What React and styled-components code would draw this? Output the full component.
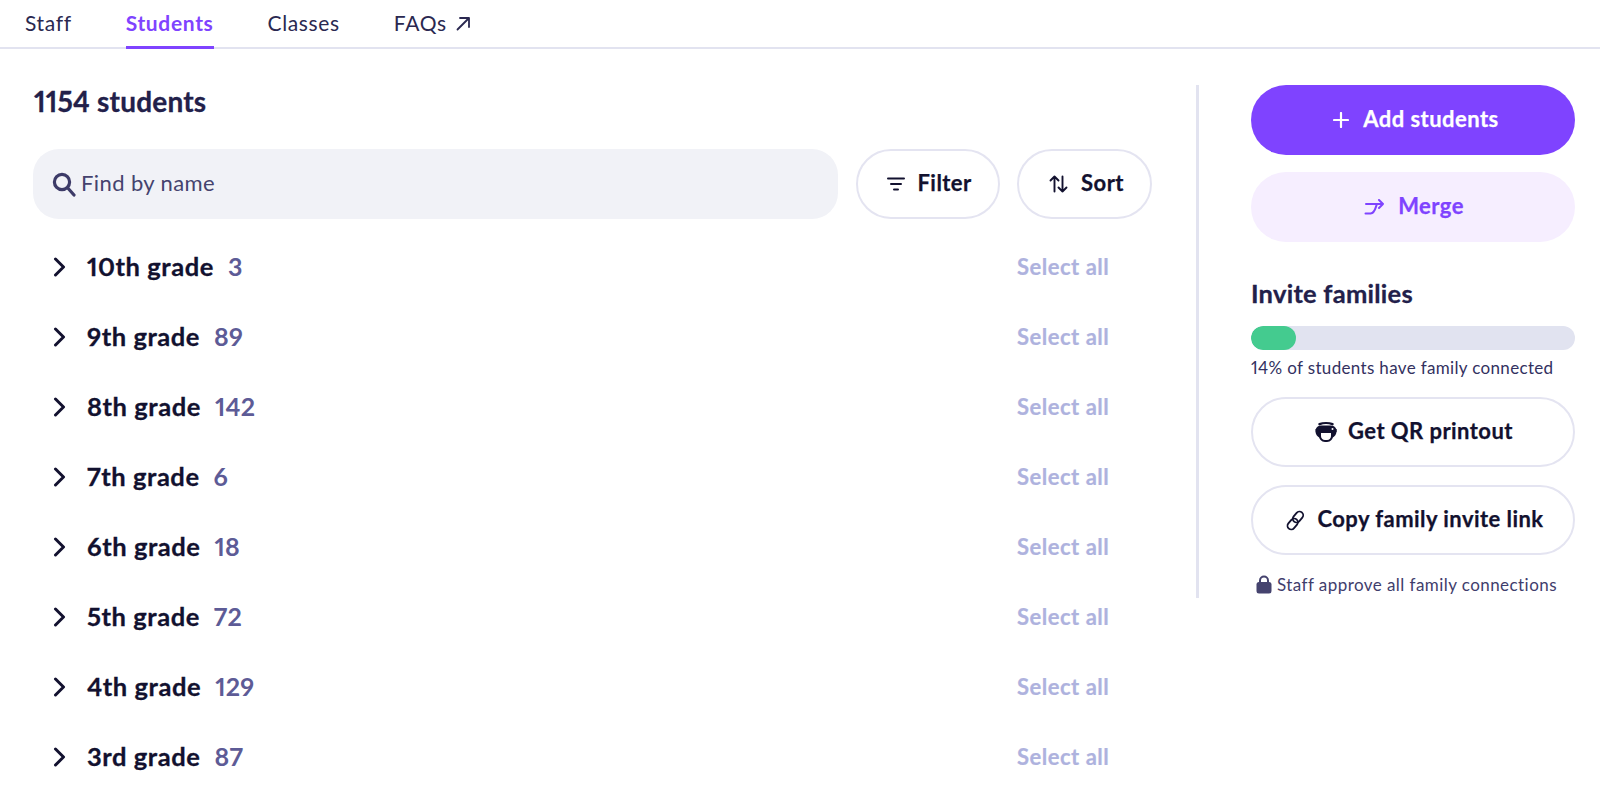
import React from "react";
import styled, { createGlobalStyle } from "styled-components";

const Global = createGlobalStyle`
  html, body { margin: 0; padding: 0; background: #fff; }
  body { font-family: "Lato", "Open Sans", sans-serif; color: #22204a; overflow: hidden; font-variant-numeric: proportional-nums; }
  * { box-sizing: border-box; }
`;

const Page = styled.div`
  width: 1600px;
  height: 802px;
  overflow: hidden;
`;
const TabBar = styled.nav`
  display: flex;
  height: 49px;
  padding-left: 25px;
  gap: 54px;
  border-bottom: 2px solid #e2e3f0;
`;
const Tab = styled.a`
  height: 49px;
  padding-top: 9px;
  font-size: 21px;
  line-height: 28px;
  letter-spacing: 0.65px;
  font-weight: ${(p) => (p.$active ? 700 : 400)};
  color: ${(p) => (p.$active ? "#7f43ff" : "#2a2850")};
  border-bottom: ${(p) => (p.$active ? "3px solid #7f43ff" : "none")};
  display: flex;
  gap: 9px;
  svg { margin-top: 7px; }
`;
const Body = styled.div`
  display: flex;
  padding: 36px 24px 0 33px;
  align-items: flex-start;
`;
const Main = styled.section`
  width: 1119px;
  flex: none;
`;
const Heading = styled.h1`
  margin: 0 0 0 1px;
  height: 64px;
  font-size: 28px;
  line-height: 32px;
  font-weight: 700;
  letter-spacing: 0.2px;
  -webkit-text-stroke: 0.3px #22204a;
  color: #22204a;
`;
const Toolbar = styled.div`
  display: flex;
  gap: 17.5px;
`;
const Search = styled.label`
  width: 805.5px;
  height: 70px;
  border-radius: 26px;
  background: #f1f2f7;
  display: flex;
  align-items: center;
  padding: 0 0 3px 19px;
  gap: 5px;
  font-size: 22px;
  letter-spacing: 0.4px;
  color: #45436e;
  svg { margin-top: 3px; }
`;
const Pill = styled.button`
  height: 70px;
  width: ${(p) => p.$w || "100%"};
  border-radius: 35px;
  border: 2px solid #e4e4f1;
  background: #fff;
  display: flex;
  align-items: center;
  justify-content: center;
  gap: ${(p) => p.$gap || "12px"};
  font-family: inherit;
  font-size: 22px;
  font-weight: 700;
  letter-spacing: 0.45px;
  -webkit-text-stroke: 0.25px #12112f;
  color: #12112f;
  padding: 0 0 3px ${(p) => p.$pl || "2px"};
  svg { margin-top: 3px; }
`;
const Rows = styled.ul`
  list-style: none;
  margin: 12px 0 0;
  padding: 0;
`;
const Row = styled.li`
  height: 70px;
  display: flex;
  align-items: center;
  padding-left: 20px;
  svg { margin-top: 2px; }
`;
const Grade = styled.span`
  margin-left: 21px;
  font-size: 25.5px;
  font-weight: 700;
  color: #12112f;
  letter-spacing: 0.55px;
  -webkit-text-stroke: 0.3px #12112f;
`;
const Count = styled.span`
  margin-left: 14px;
  font-size: 25px;
  font-weight: 700;
  letter-spacing: 0.3px;
  color: #5d5b96;
`;
const SelectAll = styled.span`
  margin-left: auto;
  width: 135px;
  font-size: 22px;
  font-weight: 700;
  letter-spacing: 0.5px;
  -webkit-text-stroke: 0.2px #aeb2de;
  color: #aeb2de;
`;
const Divider = styled.div`
  width: 3px;
  height: 513px;
  margin: 0 0 0 44px;
  flex: none;
  background: #e2e3f0;
`;
const Side = styled.aside`
  width: 324px;
  margin-left: 52px;
  flex: none;
  display: flex;
  flex-direction: column;
`;
const Solid = styled.button`
  height: 70px;
  border: 0;
  border-radius: 35px;
  width: 100%;
  background: ${(p) => (p.$soft ? "#f6eeff" : "#7f43ff")};
  color: ${(p) => (p.$soft ? "#7f43ff" : "#fff")};
  margin-bottom: 17px;
  display: flex;
  align-items: center;
  justify-content: center;
  gap: ${(p) => p.$gap};
  font-family: inherit;
  font-size: 22px;
  font-weight: 700;
  letter-spacing: 0.45px;
  -webkit-text-stroke: 0.25px ${(p) => (p.$soft ? "#7f43ff" : "#fff")};
  padding: 0 0 3px ${(p) => p.$pl};
  svg { margin-top: 3px; }
`;
const SubHeading = styled.h2`
  margin: 17px 0 0;
  font-size: 25.5px;
  line-height: 34px;
  font-weight: 700;
  letter-spacing: 0.25px;
  -webkit-text-stroke: 0.3px #22204a;
  color: #22204a;
`;
const Track = styled.div`
  margin-top: 16px;
  height: 24px;
  border-radius: 12px;
  background: #e1e3f0;
  overflow: hidden;
`;
const Fill = styled.div`
  height: 100%;
  border-radius: 12px;
  background: #44cb8f;
`;
const Note = styled.p`
  margin: 7px 0 19px;
  font-size: 17px;
  line-height: 21px;
  letter-spacing: 0.34px;
  color: #33315f;
`;
const Actions = styled.div`
  display: flex;
  flex-direction: column;
  gap: 18px;
`;
const Approve = styled.p`
  margin: 19px 0 0 5px;
  display: flex;
  align-items: center;
  gap: 5px;
  font-size: 17px;
  line-height: 21px;
  letter-spacing: 0.44px;
  color: #3f3d6c;
`;

const grades = [
  ["10th grade", 3], ["9th grade", 89], ["8th grade", 142], ["7th grade", 6],
  ["6th grade", 18], ["5th grade", 72], ["4th grade", 129], ["3rd grade", 87],
];

const Chevron = () => (
  <svg width="13" height="20" viewBox="0 0 13 20" fill="none" stroke="#12112f" strokeWidth="3" strokeLinecap="round" strokeLinejoin="round">
    <path d="M2.5 2 10.5 10 2.5 18" />
  </svg>
);

export default function App() {
  return (
    <Page>
      <Global />
      <TabBar>
        <Tab>Staff</Tab>
        <Tab $active>Students</Tab>
        <Tab>Classes</Tab>
        <Tab>
          FAQs
          <svg width="15" height="15" viewBox="0 0 15 15" fill="none" stroke="#2a2850" strokeWidth="1.8" strokeLinecap="round" strokeLinejoin="round">
            <path d="M1.5 13.5 13 2M4 2h9v9" />
          </svg>
        </Tab>
      </TabBar>
      <Body>
        <Main>
          <Heading>1154 students</Heading>
          <Toolbar>
            <Search>
              <svg width="24" height="25" viewBox="0 0 24 25" fill="none" stroke="#3d3b68" strokeWidth="3.2" strokeLinecap="round">
                <circle cx="10" cy="10" r="7.6" />
                <path d="M15.8 16 22 23" />
              </svg>
              Find by name
            </Search>
            <Pill $w="144px" $gap="12px" $pl="4px">
              <svg width="18" height="14" viewBox="0 0 18 14" fill="none" stroke="#12112f" strokeWidth="2" strokeLinecap="round">
                <path d="M1 1.5h16M4 7h10M7 12.5h4" />
              </svg>
              Filter
            </Pill>
            <Pill $w="135px" $gap="13px" $pl="4px">
              <svg width="19" height="18" viewBox="0 0 19 18" fill="none" stroke="#12112f" strokeWidth="1.9" strokeLinecap="round" strokeLinejoin="round">
                <path d="M5.5 16.5V1.5M1.5 5.5l4-4 4 4M13.5 1.5v15M9.5 12.5l4 4 4-4" />
              </svg>
              Sort
            </Pill>
          </Toolbar>
          <Rows>
            {grades.map(([g, n]) => (
              <Row key={g}>
                <Chevron />
                <Grade>{g}</Grade>
                <Count>{n}</Count>
                <SelectAll>Select all</SelectAll>
              </Row>
            ))}
          </Rows>
        </Main>
        <Divider />
        <Side>
          <Solid $gap="14px" $pl="6px">
            <svg width="16" height="16" viewBox="0 0 16 16" fill="none" stroke="#fff" strokeWidth="2.2" strokeLinecap="round">
              <path d="M8 1v14M1 8h14" />
            </svg>
            Add students
          </Solid>
          <Solid $soft $gap="13px" $pl="2px">
            <svg width="21" height="16" viewBox="0 0 21 16" fill="none" stroke="#7f43ff" strokeWidth="2" strokeLinecap="round" strokeLinejoin="round">
              <path d="M2 5h17M15 1l4 4-4 4M13 5c-1.500 2.500-1.500 9-6.500 9.500H1.500" />
            </svg>
            Merge
          </Solid>
          <SubHeading>Invite families</SubHeading>
          <Track>
            <Fill style={{ width: "14%" }} />
          </Track>
          <Note>14% of students have family connected</Note>
          <Actions>
            <Pill $gap="11px">
              <svg width="22" height="22" viewBox="0 0 22 22">
                <path fill="none" stroke="#12112f" strokeWidth="2.4" strokeLinecap="round" d="M4.500 3.200C8 1.800 14 1.800 17.500 3.200" />
                <path fill="#12112f" d="M6 4.500h10c3.500 0 5.500 2.800 5.500 5.700s-2 6.300-5 6.300h-11c-3 0-5-3.400-5-6.300S2.500 4.500 6 4.500z" />
                <path fill="#fff" stroke="#12112f" strokeWidth="2" d="M5 11h12v3.500a5 5 0 0 1-5 5.500h-2a5 5 0 0 1-5-5.500z" />
                <path fill="#12112f" d="M0.500 8h4v3H1zM17.500 11h4l.2-3h-4z" />
                <circle cx="17.500" cy="8" r="1" fill="#fff" />
              </svg>
              Get QR printout
            </Pill>
            <Pill $gap="11px" $pl="3px">
              <svg width="21" height="21" viewBox="0 0 21 21" fill="none" stroke="#12112f" strokeWidth="1.8">
                <rect x="9.300" y="1" width="7.400" height="12" rx="3.700" transform="rotate(40 13 7)" />
                <rect x="4" y="8" width="7.400" height="12" rx="3.700" transform="rotate(40 7.700 14)" />
              </svg>
              Copy family invite link
            </Pill>
          </Actions>
          <Approve>
            <svg width="16" height="19" viewBox="0 0 16 19">
              <path fill="none" stroke="#45436e" strokeWidth="2" d="M4 8V5.500a4 4 0 0 1 8 0V8" />
              <rect x="0.500" y="7" width="15" height="11.500" rx="2.500" fill="#45436e" />
            </svg>
            Staff approve all family connections
          </Approve>
        </Side>
      </Body>
    </Page>
  );
}
